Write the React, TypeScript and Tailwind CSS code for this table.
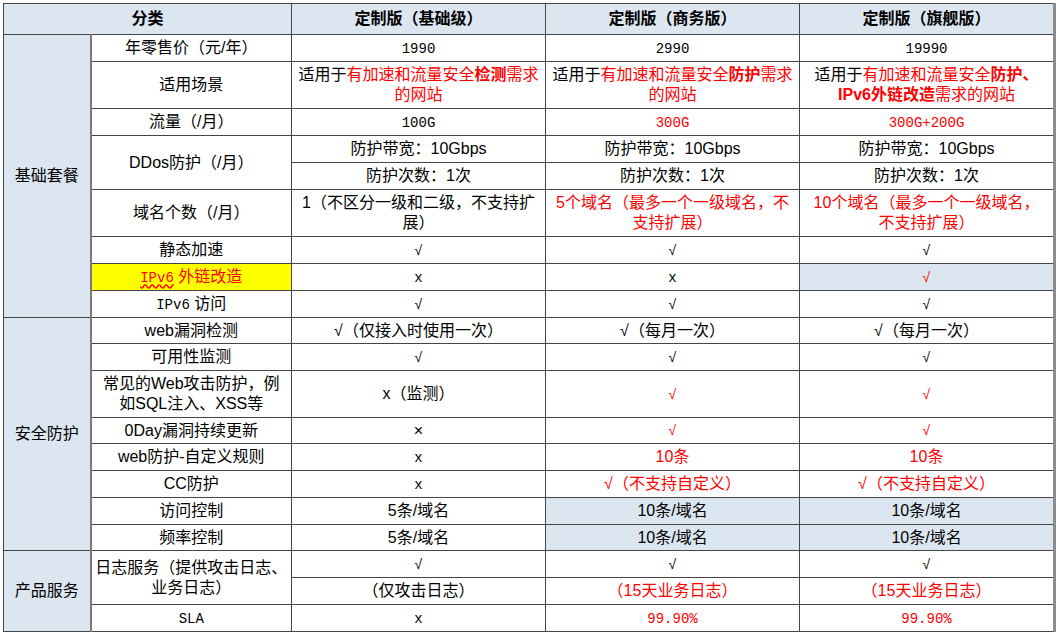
import React from 'react';

interface TdProps {
  children?: React.ReactNode;
  className?: string;
  rowSpan?: number;
  colSpan?: number;
}

const Td: React.FC<TdProps> = ({ children, className = '', rowSpan, colSpan }) => (
  <td
    rowSpan={rowSpan}
    colSpan={colSpan}
    className={`border border-[#454545] p-0 text-center align-middle leading-[20px] ${className}`}
  >
    {children}
  </td>
);

// SimSun 风格的半角字符
const M: React.FC<{ children: React.ReactNode; className?: string }> = ({ children, className = '' }) => (
  <span className={`font-['Liberation_Mono',monospace] text-[14px] ${className}`}>{children}</span>
);

const Check: React.FC<{ red?: boolean }> = ({ red }) => (
  <span className={`font-['Liberation_Mono',monospace] text-[14px] ${red ? 'text-[#ff0000]' : 'text-black'}`}>√</span>
);

const R: React.FC<{ children: React.ReactNode; bold?: boolean }> = ({ children, bold }) => (
  <span className={`text-[#ff0000] ${bold ? 'font-bold' : ''}`}>{children}</span>
);

export default function App() {
  const h = 'h-[27px]';
  const hs = 'h-[26px]';
  const h2 = 'h-[47px]';
  const blue = 'bg-[#dce6f1]';

  return (
    <div className="bg-white w-[1059px] h-[639px] pt-[3px] pl-[3px]">
      <table className="table-fixed border-collapse w-[1051px] text-[16px] text-black font-['Liberation_Sans','Noto_Sans_CJK_SC',sans-serif] border-r-[3px] border-r-[#8c8c8c]">
        <colgroup>
          <col className="w-[87px]" />
          <col className="w-[201px]" />
          <col className="w-[254px]" />
          <col className="w-[254px]" />
          <col className="w-[255px]" />
        </colgroup>
        <thead>
          <tr>
            <Td colSpan={2} className={`h-[31px] ${blue} font-bold`}>分类</Td>
            <Td className={`${blue} font-bold`}>定制版（基础级）</Td>
            <Td className={`${blue} font-bold`}>定制版（商务版）</Td>
            <Td className={`${blue} font-bold`}>定制版（旗舰版）</Td>
          </tr>
        </thead>
        <tbody>
          <tr>
            <Td rowSpan={9} className={`${blue} border-r-2 border-r-[#7a7a7a]`}>基础套餐</Td>
            <Td className={h}>年零售价（元/年）</Td>
            <Td><M>1990</M></Td>
            <Td><M>2990</M></Td>
            <Td><M>19990</M></Td>
          </tr>
          <tr>
            <Td className={h2}>适用场景</Td>
            <Td>
              适用于<R>有加速和流量安全</R><R bold>检测</R><R>需求</R>
              <br />
              <R>的网站</R>
            </Td>
            <Td>
              适用于<R>有加速和流量安全</R><R bold>防护</R><R>需求</R>
              <br />
              <R>的网站</R>
            </Td>
            <Td>
              适用于<R>有加速和流量安全</R><R bold>防护、</R>
              <br />
              <R bold>IPv6外链改造</R><R>需求的网站</R>
            </Td>
          </tr>
          <tr>
            <Td className={h}>流量（/月）</Td>
            <Td><M>100G</M></Td>
            <Td><M className="text-[#ff0000]">300G</M></Td>
            <Td><M className="text-[#ff0000]">300G+200G</M></Td>
          </tr>
          <tr>
            <Td rowSpan={2}>DDos防护（/月）</Td>
            <Td className={h}>防护带宽：10Gbps</Td>
            <Td>防护带宽：10Gbps</Td>
            <Td>防护带宽：10Gbps</Td>
          </tr>
          <tr>
            <Td className={h}>防护次数：1次</Td>
            <Td>防护次数：1次</Td>
            <Td>防护次数：1次</Td>
          </tr>
          <tr>
            <Td className={h2}>域名个数（/月）</Td>
            <Td>
              1（不区分一级和二级，不支持扩
              <br />
              展）
            </Td>
            <Td className="text-[#ff0000]">
              5个域名（最多一个一级域名，不
              <br />
              支持扩展）
            </Td>
            <Td className="text-[#ff0000]">
              10个域名（最多一个一级域名，
              <br />
              不支持扩展）
            </Td>
          </tr>
          <tr>
            <Td className={h}>静态加速</Td>
            <Td><Check /></Td>
            <Td><Check /></Td>
            <Td><Check /></Td>
          </tr>
          <tr>
            <Td className={`${h} bg-[#ffff00] text-[#ff0000]`}>
              <M className="underline decoration-wavy decoration-[#ff0000] underline-offset-2">IPv6</M> 外链改造
            </Td>
            <Td><M>x</M></Td>
            <Td><M>x</M></Td>
            <Td className={blue}><Check red /></Td>
          </tr>
          <tr>
            <Td className={h}><M>IPv6</M> 访问</Td>
            <Td><Check /></Td>
            <Td><Check /></Td>
            <Td><Check /></Td>
          </tr>

          <tr>
            <Td rowSpan={8} className={`${blue} border-r-2 border-r-[#7a7a7a]`}>安全防护</Td>
            <Td className={hs}>web漏洞检测</Td>
            <Td>√（仅接入时使用一次）</Td>
            <Td>√（每月一次）</Td>
            <Td>√（每月一次）</Td>
          </tr>
          <tr>
            <Td className={h}>可用性监测</Td>
            <Td><Check /></Td>
            <Td><Check /></Td>
            <Td><Check /></Td>
          </tr>
          <tr>
            <Td className={h2}>
              常见的Web攻击防护，例
              <br />
              如SQL注入、XSS等
            </Td>
            <Td>x（监测）</Td>
            <Td><Check red /></Td>
            <Td><Check red /></Td>
          </tr>
          <tr>
            <Td className={hs}>0Day漏洞持续更新</Td>
            <Td>×</Td>
            <Td><Check red /></Td>
            <Td><Check red /></Td>
          </tr>
          <tr>
            <Td className={h}>web防护-自定义规则</Td>
            <Td><M>x</M></Td>
            <Td className="text-[#ff0000]">10条</Td>
            <Td className="text-[#ff0000]">10条</Td>
          </tr>
          <tr>
            <Td className={h}>CC防护</Td>
            <Td><M>x</M></Td>
            <Td className="text-[#ff0000]">√（不支持自定义）</Td>
            <Td className="text-[#ff0000]">√（不支持自定义）</Td>
          </tr>
          <tr>
            <Td className={h}>访问控制</Td>
            <Td>5条/域名</Td>
            <Td className={blue}>10条/域名</Td>
            <Td className={blue}>10条/域名</Td>
          </tr>
          <tr>
            <Td className={hs}>频率控制</Td>
            <Td>5条/域名</Td>
            <Td className={blue}>10条/域名</Td>
            <Td className={blue}>10条/域名</Td>
          </tr>

          <tr>
            <Td rowSpan={3} className={`${blue} border-r-2 border-r-[#7a7a7a]`}>产品服务</Td>
            <Td rowSpan={2}>
              日志服务（提供攻击日志、
              <br />
              业务日志）
            </Td>
            <Td className={h}><Check /></Td>
            <Td><Check /></Td>
            <Td><Check /></Td>
          </tr>
          <tr>
            <Td className={h}>（仅攻击日志）</Td>
            <Td className="text-[#ff0000]">（15天业务日志）</Td>
            <Td className="text-[#ff0000]">（15天业务日志）</Td>
          </tr>
          <tr>
            <Td className={h}><M>SLA</M></Td>
            <Td><M>x</M></Td>
            <Td><M className="text-[#ff0000]">99.90%</M></Td>
            <Td><M className="text-[#ff0000]">99.90%</M></Td>
          </tr>
        </tbody>
      </table>
    </div>
  );
}
